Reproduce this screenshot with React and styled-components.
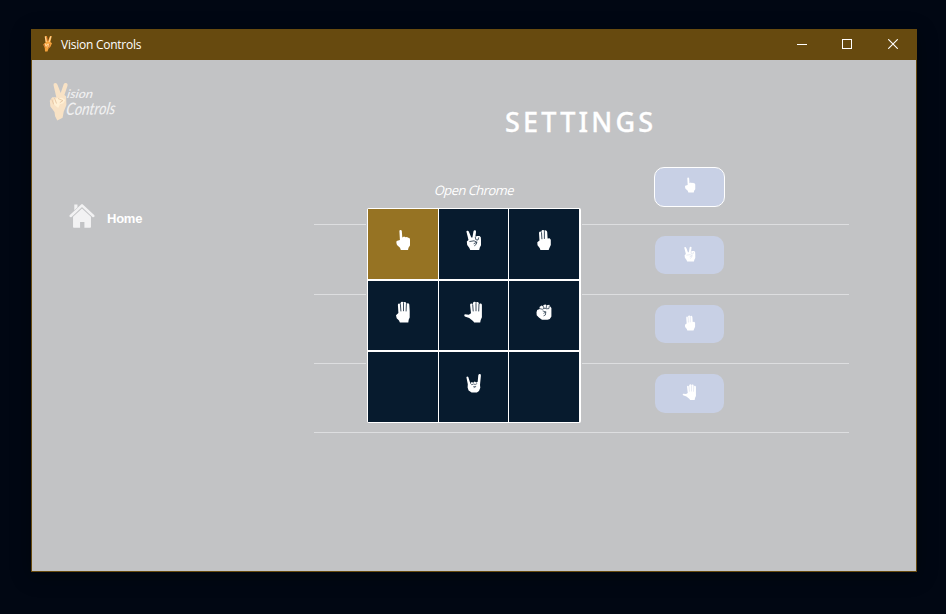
import React from "react";
import styled, { createGlobalStyle } from "styled-components";

const GlobalStyle = createGlobalStyle`
  *, *::before, *::after { box-sizing: border-box; }
  body { margin: 0; background: #010713; }
`;

const Desktop = styled.div`
  width: 946px;
  height: 614px;
  padding: 29px 29px 42px 31px;
  overflow: hidden;
  background: #010713;
`;

const Window = styled.main`
  width: 886px;
  height: 543px;
  display: flex;
  flex-direction: column;
  border: 1px solid #674a0f;
  border-top: 0;
  background: #c2c3c5;
  box-shadow: 0 4px 18px rgba(0, 0, 0, 0.35);
`;

const TitleBar = styled.header`
  height: 31px;
  flex: none;
  display: flex;
  align-items: center;
  margin: 0 -1px;
  padding: 0 1px 0 12px;
  background: #674a0f;
`;

const WindowTitle = styled.span`
  margin-left: 8px;
  flex: 1;
  color: #fff;
  font: 12px/31px "Open Sans", "Noto Sans", sans-serif;
  letter-spacing: -0.25px;
`;

const WindowButton = styled.button`
  width: 46px;
  height: 31px;
  display: grid;
  place-items: center;
  padding: 0 0 1px;
  border: 0;
  background: transparent;
`;

const Body = styled.div`
  flex: 1;
  display: flex;
`;

const Sidebar = styled.aside`
  width: 282px;
  padding: 20px 0 0 16px;
`;

const NavItem = styled.a`
  display: flex;
  align-items: flex-start;
  margin: 79px 0 0 21px;
  color: #fff;
  font: bold 13px/28px "Liberation Sans", Arial, sans-serif;
  gap: 12px;
`;

const NavLabel = styled.span`
  padding-top: 3px;
  letter-spacing: -0.25px;
`;

const Content = styled.section`
  width: 535px;
`;

const Heading = styled.h1`
  margin: 43px 0 0 191px;
  height: 53px;
  color: #fff;
  font: 500 27px/38px "Noto Sans", "Open Sans", sans-serif;
  letter-spacing: 3.2px;
  -webkit-text-stroke: 0.3px #fff;
  white-space: nowrap;
`;

const SettingList = styled.div`
  position: relative;
`;

const SettingRow = styled.div`
  display: flex;
  align-items: flex-start;
  height: ${(p) => p.$height}px;
  padding-top: ${(p) => p.$top}px;
  border-bottom: 1px solid #dddee0;
`;

const ActionName = styled.span`
  width: 340px;
  padding-left: 121px;
  color: #fff;
  font: 13px/46px "Open Sans", "Noto Sans", sans-serif;
  letter-spacing: -0.55px;
  white-space: nowrap;
  transform: skewX(-14deg);
`;

const GestureButton = styled.button`
  width: ${(p) => (p.$active ? 71 : 69)}px;
  height: ${(p) => p.$height}px;
  margin-left: ${(p) => (p.$active ? 0 : 1)}px;
  display: flex;
  justify-content: center;
  align-items: flex-start;
  padding: ${(p) => (p.$active ? 8 : 9)}px 0 0;
  border: ${(p) => (p.$active ? "1px solid #fff" : "0")};
  border-radius: 10px;
  background: #c8d0e5;
`;

const Picker = styled.div`
  position: absolute;
  left: 53px;
  top: 52px;
  width: 214px;
  height: 215px;
  display: grid;
  grid-template-columns: 70px 69px 70px;
  grid-template-rows: 70px 69px 70px;
  gap: 2px 1px;
  padding: 1px 2px 1px 1px;
  border-radius: 2px;
  background: #fff;
  box-shadow: 0 0 0 1px #c2c3c5;
`;

const PickerCell = styled.button`
  display: flex;
  justify-content: center;
  align-items: flex-start;
  padding: 19px 0 0;
  border: 0;
  background: ${(p) => (p.$selected ? "#967323" : "#071b2e")};
`;

const HandSvg = styled.svg`
  display: block;
  flex: none;
  fill: #fff;
  stroke-linecap: round;
  stroke-linejoin: round;
`;

function Hand({ kind, size = 24, crease = "#26384a" }) {
  return (
    <HandSvg width={size} height={size} viewBox="0 0 24 24">
      {kind === "one" && (
        <path d="M8.4 3.1Q8.4 2 9.5 2Q10.7 2 10.8 3.1L11.3 9.5L13 8.6L14.6 9.2L16 8.9L17.2 9.8L18.5 9.9L19 11.4V17.6L17.5 19.8L17 22H9.8L9 19.8L6 17Q4.9 14.1 5.6 12.9L8.9 12.1Z" />
      )}
      {kind === "two" && (
        <>
          <path d="M4.4 3.6Q4.6 2.4 5.8 2.8Q6.8 3.2 7.2 4.4L9.3 9.5L10.4 9.6L11.5 3.3Q11.9 2 13.1 2.2Q14.3 2.5 14 4L13.4 8.8L15.2 8.1L17.6 8L18.8 9.2L19 12V17.2L17.8 19.5L17.2 22H8.2L7.4 20L5.2 17L4.8 13.5L6.5 12.1Z" />
          <path d="M7.8 13.5L12 12.8L14.8 14.2L12 15.6M14.8 14.2L14.2 16.3L12.6 17.6M13.3 9.2L13.9 11.8L16 12L16.6 9.8" fill="none" stroke={crease} strokeWidth=".85" />
        </>
      )}
      {kind === "three" && (
        <>
          <path d="M7 5.1Q7 3.4 8.1 3.4Q9.1 3.4 9.3 4.6L9.5 3Q9.8 2 10.9 2Q12.1 2 12.4 3.1Q12.7 2.2 13.9 2.4Q15 2.7 15.2 4L15.6 10.6L17.6 10.2L18.8 11.7V17L17.3 20.2L16.7 22H8.4L7.7 20L5.5 17.2L5.3 14.3L7.5 12.5Z" />
          <path d="M9.5 4.7L9.9 10.8M12.4 3.5V10.5" fill="none" stroke={crease} strokeWidth=".9" />
        </>
      )}
      {kind === "four" && (
        <>
          <path d="M6.9 5Q6.8 3.5 7.9 3.4Q9.1 3.4 9.3 4.5L9.6 3Q9.9 1.8 11.1 1.8Q12.2 1.8 12.5 2.9Q12.8 1.8 14 2Q15.2 2.1 15.3 3.4L15.6 4Q16 3 17.1 3.2Q18.2 3.4 18.3 4.6L18.7 10.8V17.5L17.7 19.8L17.3 22.5H8.9L8 20.4L5.7 18.2L5 15.3L7.4 13Z" />
          <path d="M9.4 4.5L9.9 11M12.5 3.4V10.8M15.4 4L15.1 11" fill="none" stroke={crease} strokeWidth=".9" />
        </>
      )}
      {kind === "five" && (
        <>
          <path d="M8.1 5Q8 3.7 9.1 3.5Q10.3 3.5 10.6 4.6L11 3Q11.3 1.8 12.5 1.8Q13.7 1.8 14 2.9Q14.4 1.8 15.6 2Q16.8 2.2 16.9 3.5L17.2 4.2Q17.7 3.3 18.8 3.6Q20 3.9 19.9 5.2V17.2L18.7 20.1L18.2 22.5H12.2L11 20.9L7.2 18.1L2.8 16.4Q1.6 15.2 2.8 14.3L6.8 14.8L9 13.3Z" />
          <path d="M10.7 4.8L11.2 11M14 3.5V10.8M17 4L16.7 11" fill="none" stroke={crease} strokeWidth=".9" />
        </>
      )}
      {kind === "fist" && (
        <>
          <path d="M4.5 12.3L5.2 10L7.8 8.9L7.5 7L9.5 5.6L11.2 6.3L11.5 5L13.4 4.4L14.9 5.3L17.2 4.8L18.2 6.5L19.4 8L19.4 16.5L17.8 19L15.6 19.8H10L6.9 17.6L4.7 15.3Z" />
          <path d="M8 8.7L10.5 9.3L12.1 8.3L11.2 6.3M12.1 8.3L14.2 8.4L14.5 5.6M17.3 6.3L16.9 8.6L14.5 8.8M11 11L13.8 12L11.8 13.2M13.8 12L13.4 15L11.9 15.7" fill="none" stroke={crease} strokeWidth=".75" />
        </>
      )}
      {kind === "rock" && (
        <>
          <path d="M4.4 6.3Q4.9 5 6.3 5.9L7.7 10.5L8.4 12.2L9.8 11L11.2 11.8L12.7 10.6L14.3 11.4L15.7 10.7L16.3 4.2Q16.8 2.8 18 3.1Q19.1 3.4 18.9 4.8L18 14L18.3 16.8L17 20L14.9 21.4H9.6L6.6 19.5L5.6 16.4L5.8 13.2Z" />
          <path d="M8.5 12.5L9.8 13.7L11.6 13L13.2 13.5L14.8 12.7M11.5 15.8L13.8 15.4L12.5 16.8" fill="none" stroke={crease} strokeWidth=".7" />
        </>
      )}
    </HandSvg>
  );
}

function AppIcon() {
  return (
    <svg width="10" height="17" viewBox="0 0 10 17">
      <path d="M2 0H3.8L5 5L7 0H8.8L7.4 6.1L9 7.2L7.3 11L5.5 12.5L4.5 15.5H2L1.8 12L.2 8.5L2.6 6.5Z" fill="#f5a13b" />
      <path d="M2.2 .5L3.3 6M7.8 .5L6 6M2 7.5L3 10L5 8L6 9.5L4.7 11.5" fill="none" stroke="#ffd596" strokeWidth="1.1" />
      <path d="M4 .7L4.8 5M1 8L2.1 11.5M6.8 8L5.5 12" fill="none" stroke="#b35424" strokeWidth=".6" />
    </svg>
  );
}

const LogoSvg = styled.svg`
  display: block;
  overflow: visible;
`;

const LogoText = styled.text`
  fill: #f0f0f1;
  font-family: "Lato", sans-serif;
  font-style: italic;
  font-weight: 500;
`;

function Logo() {
  return (
    <LogoSvg width="76" height="43" viewBox="0 0 76 43">
      <g fill="#f8e2c5">
        <path d="M5.5 5Q5.2 3 7.3 3Q9 3 9.6 5L12.7 13L15.8 4Q16.6 2.5 18.3 3Q20.2 3.6 19.5 5.8L16.4 15L18.1 16.3L18.4 25L15.7 31.8L14.6 37.8L9.3 40.4L7.1 36.2L6.5 32L2.4 26.5L1.8 20.7L4.2 17.3L8.3 17.3Z" />
        <path d="M6 19.1L10.3 18.1L14 17.8L17.4 20.1L15.2 23.3L12 24.3L10.2 28L5.7 24.3Z" fill="#fff0d5" />
        <path d="M3.8 19.3L5.7 24.4M6.5 18.2L8.5 23.5M10 18.5L14.9 20.6L11.8 22.7" fill="none" stroke="#e5c5a3" strokeWidth=".9" />
      </g>
      <LogoText x="18.5" y="18.2" fontSize="12" textLength="26" lengthAdjust="spacingAndGlyphs" transform="translate(3.2 0) skewX(-10)">ision</LogoText>
      <LogoText x="18" y="34.5" fontSize="17" textLength="49" lengthAdjust="spacingAndGlyphs" transform="translate(5.7 0.5) rotate(-1 18 34) skewX(-10)">Controls</LogoText>
    </LogoSvg>
  );
}

function HomeIcon() {
  return (
    <svg width="26" height="28" viewBox="0 0 27 28">
      <path d="M1.8 14L13.5 3L25.2 14" fill="none" stroke="#f2f2f3" strokeWidth="2.6" strokeLinecap="round" strokeLinejoin="round" />
      <path d="M5.5 8V2H8.8V5Z M13.5 6.2L22.8 14.8V25.5Q22.8 26.3 22 26.3H16V20.2H11.5V26.3H5Q4.2 26.3 4.2 25.5V14.8Z" fill="#f2f2f3" />
    </svg>
  );
}

const rows = [
  { kind: "one", height: 69, top: 11, buttonHeight: 40, name: "Open Chrome" },
  { kind: "two", height: 70, top: 11, buttonHeight: 38 },
  { kind: "three", height: 69, top: 10, buttonHeight: 38 },
  { kind: "five", height: 69, top: 10, buttonHeight: 39 },
];

const gestures = ["one", "two", "three", "four", "five", "fist", null, "rock", null];

export default function App() {
  return (
    <Desktop>
      <GlobalStyle />
      <Window>
        <TitleBar>
          <AppIcon />
          <WindowTitle>Vision Controls</WindowTitle>
          <WindowButton aria-label="Minimize">
            <svg width="12" height="10"><path d="M2 5.5H12" stroke="#fff" /></svg>
          </WindowButton>
          <WindowButton aria-label="Maximize">
            <svg width="10" height="10"><rect x=".5" y=".5" width="9" height="9" fill="none" stroke="#fff" /></svg>
          </WindowButton>
          <WindowButton aria-label="Close">
            <svg width="10" height="10"><path d="M.2.2L9.8 9.8M9.8.2L.2 9.8" stroke="#fff" strokeWidth="1.1" /></svg>
          </WindowButton>
        </TitleBar>
        <Body>
          <Sidebar>
            <Logo />
            <NavItem>
              <HomeIcon />
              <NavLabel>Home</NavLabel>
            </NavItem>
          </Sidebar>
          <Content>
            <Heading>SETTINGS</Heading>
            <SettingList>
              {rows.map((row, i) => (
                <SettingRow key={row.kind} $height={row.height} $top={row.top}>
                  <ActionName>{row.name}</ActionName>
                  <GestureButton $active={i === 0} $height={row.buttonHeight}>
                    <Hand kind={row.kind} size={18} crease="#dce1ee" />
                  </GestureButton>
                </SettingRow>
              ))}
              <Picker>
                {gestures.map((kind, i) => (
                  <PickerCell key={i} $selected={i === 0}>
                    {kind && <Hand kind={kind} />}
                  </PickerCell>
                ))}
              </Picker>
            </SettingList>
          </Content>
        </Body>
      </Window>
    </Desktop>
  );
}
